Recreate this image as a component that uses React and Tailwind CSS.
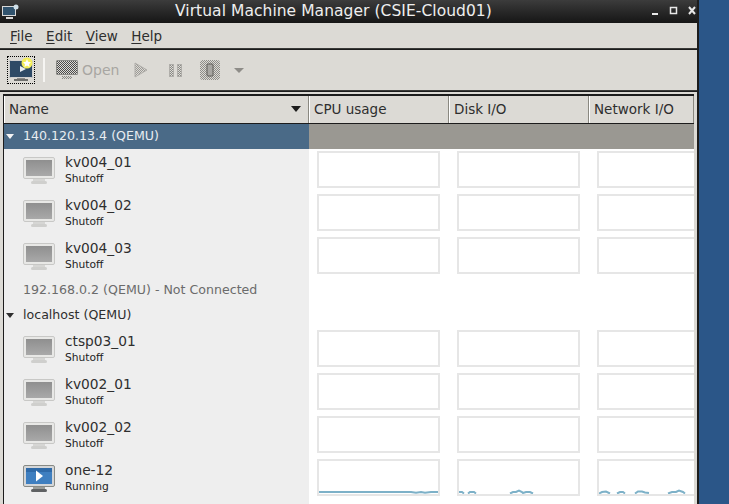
import React from 'react';

const font = { fontFamily: '"DejaVu Sans", sans-serif' };

const groups = [
  {
    name: '140.120.13.4 (QEMU)',
    selected: true,
    vms: ['kv004_01', 'kv004_02', 'kv004_03'],
  },
  { name: '192.168.0.2 (QEMU) - Not Connected', disconnected: true, vms: [] },
  {
    name: 'localhost (QEMU)',
    vms: ['ctsp03_01', 'kv002_01', 'kv002_02'],
  },
];

const MonitorIcon = ({ running = false }) => (
  <svg width="32" height="28" viewBox="0 0 32 28" className="shrink-0">
    <defs>
      <linearGradient id="offScreen" x1="0" y1="0" x2="0" y2="1">
        <stop offset="0" stopColor="#8f8f8f" />
        <stop offset="1" stopColor="#a9a9a9" />
      </linearGradient>
    </defs>
    <rect x="0.5" y="0.5" width="31" height="21" rx="1.5" fill={running ? '#d4d6d8' : '#e8e8e6'} stroke={running ? '#888a85' : '#c8c8c6'} />
    <rect x="3" y="3" width="26" height="16" fill={running ? '#3f7fc0' : 'url(#offScreen)'} />
    {running && <rect x="3" y="3" width="26" height="4" fill="#2f6aa8" />}
    {running && <path d="M13 5.5 L20 11 L13 16.5 Z" fill="#ffffff" />}
    <rect x="10" y="22" width="12" height="2" fill={running ? '#9a9c98' : '#d6d6d4'} />
    <rect x="8" y="24" width="16" height="3" rx="1.5" fill={running ? '#5f6163' : '#cfcfcd'} />
  </svg>
);

const Chart = ({ points, width = 'w-[123px]', clipped = false }) => (
  <div className={`h-[37px] bg-white border-2 border-[#e6e6e6] ${width} ${clipped ? 'border-r-0' : ''} shrink-0 overflow-hidden`}>
    {points && (
      <svg width="120" height="33" viewBox="0 0 120 33">
        <path d={points} fill="none" stroke="#7db1c8" strokeWidth="2" />
      </svg>
    )}
  </div>
);

const VmRow = ({ name, status = 'Shutoff', running, cpu, disk, net }) => (
  <div className="flex h-[43px]">
    <div className="w-[305px] shrink-0 bg-[#eeeeee] flex items-center pl-[19px] pt-[1px]">
      <MonitorIcon running={running} />
      <div className="ml-[10px] mb-[2px] flex flex-col">
        <span className="text-[13.75px] leading-[17px] text-[#2e2e2e]">{name}</span>
        <span className="mt-[1px] text-[10.7px] leading-[14px] text-[#222222]">{status}</span>
      </div>
    </div>
    <div className="flex-1 min-w-0 bg-white flex gap-[17px] pl-[8px] pt-[2px] overflow-hidden">
      <Chart points={cpu} />
      <Chart points={disk} />
      <Chart points={net} width="w-[98px]" clipped />
    </div>
  </div>
);

const GroupRow = ({ name, selected, disconnected }) => {
  if (selected) {
    return (
      <div className="flex h-[25px]">
        <div className="w-[305px] shrink-0 bg-[#4a6a87] text-[#e8edf1] flex items-center text-[12.6px] pl-[2px]">
          <span className="w-0 h-0 border-x-[4.5px] border-x-transparent border-t-[5px] border-t-[#f4f4f4] mr-[9px]" />
          {name}
        </div>
        <div className="flex-1 bg-[#9a9892]" />
      </div>
    );
  }
  return (
    <div className="flex h-[25px]">
      <div className={`w-[305px] shrink-0 bg-[#eeeeee] flex items-center text-[12.6px] ${disconnected ? 'pl-[19px] text-[#6b6b6b]' : 'pl-[2px] text-[#2e2e2e]'}`}>
        {!disconnected && <span className="w-0 h-0 border-x-[4.5px] border-x-transparent border-t-[5px] border-t-[#2e2e2e] mr-[9px]" />}
        {name}
      </div>
      <div className="flex-1 bg-white" />
    </div>
  );
};

const ColumnHead = ({ label, className = '', children }) => (
  <div className={`h-[27px] pb-[1px] bg-[#dcdad5] border-r border-[#8a8880] border-l border-l-white flex items-center pl-[4px] text-[13.5px] text-[#2e2e2e] ${className}`}>
    {label}
    {children}
  </div>
);

const Menu = ({ first, rest }) => (
  <span>
    <span className="underline underline-offset-2">{first}</span>
    {rest}
  </span>
);

// the disabled toolbar icons are stippled in the screenshot
const Dither = ({ id, color }) => (
  <pattern id={id} width="2" height="2" patternUnits="userSpaceOnUse">
    <rect width="2" height="2" fill="#dcdad5" />
    <rect width="1" height="1" fill={color} />
    <rect x="1" y="1" width="1" height="1" fill={color} />
  </pattern>
);

export default function App() {
  return (
    <div className="w-[729px] h-[504px] bg-[#2b5688] overflow-hidden" style={font}>
      <div className="w-[699px] h-[504px] bg-[#1c1c1c] flex flex-col pr-[2px]">
        {/* title bar */}
        <div className="h-[23px] shrink-0 bg-gradient-to-b from-[#3c3c3c] to-[#161616] flex items-center relative text-[#eeeeee]">
          <svg width="17" height="16" viewBox="0 0 17 16" className="ml-[2px]">
            <rect x="0.5" y="2.5" width="13" height="9" fill="#30536e" stroke="#d8d8d8" />
            <rect x="4" y="13" width="7" height="2" fill="#d8d8d8" />
            <circle cx="14" cy="3" r="2.5" fill="#cfe0ea" />
          </svg>
          <span className="ml-[156px] text-[15.5px] font-medium tracking-[0.05px]">Virtual Machine Manager (CSIE-Cloud01)</span>
          <svg width="50" height="12" viewBox="0 0 50 12" className="absolute left-[651px] top-[5px]">
            <rect x="1" y="8" width="6" height="2" fill="#e8e8e8" />
            <rect x="19.5" y="2.5" width="6" height="6" fill="none" stroke="#e8e8e8" strokeWidth="1.5" />
            <path d="M38 2 L44 9 M44 2 L38 9" stroke="#e8e8e8" strokeWidth="2" />
          </svg>
        </div>

        {/* menu bar */}
        <div className="h-[26px] shrink-0 bg-[#dcdad5] border-b border-[#3a3a38] flex items-center gap-[13.5px] pl-[10px] pt-[1px] text-[13.5px] text-[#2e2e2e]">
          <Menu first="F" rest="ile" />
          <Menu first="E" rest="dit" />
          <Menu first="V" rest="iew" />
          <Menu first="H" rest="elp" />
        </div>

        {/* toolbar */}
        <div className="h-[41px] shrink-0 mt-[1px] bg-[#dcdad5] border-b border-[#3a3a38] flex items-center pl-[7px] text-[#a8a6a2] text-[14px]">
          <div className="w-[28px] h-[28px] border border-dotted border-black flex items-center justify-center relative">
            <svg width="26" height="26" viewBox="0 0 26 26">
              <rect x="1.5" y="3.5" width="23" height="17" rx="1" fill="#2e4a66" stroke="#d0d0d0" />
              <path d="M12 9 L18 12 L12 15 Z" fill="#e8edf2" />
              <rect x="9" y="21" width="8" height="1" fill="#8a8a88" />
              <rect x="6" y="22" width="14" height="2" fill="#6e6e6c" />
              <circle cx="19" cy="6" r="5.5" fill="#f4ee5a" />
              <path d="M19 2 L20.2 4.8 L23 5.2 L21 7.2 L21.6 10 L19 8.6 L16.4 10 L17 7.2 L15 5.2 L17.8 4.8 Z" fill="#ffffff" />
            </svg>
          </div>
          <div className="w-[2px] h-[24px] bg-[#f6f5f2] ml-[8px] mr-[11px]" />
          <svg width="22" height="20" viewBox="0 0 22 20">
            <defs>
              <Dither id="ditherDark" color="#4a4a4a" />
              <Dither id="ditherMid" color="#8a8a86" />
            </defs>
            <rect x="0" y="0" width="22" height="15" rx="1.5" fill="#8a8a86" />
            <rect x="1" y="1" width="20" height="13" fill="url(#ditherDark)" />
            <rect x="6" y="16" width="10" height="3" fill="url(#ditherMid)" />
          </svg>
          <span className="ml-[4px] w-[38px]">Open</span>
          <svg width="14" height="16" viewBox="0 0 14 16" className="ml-[14px]">
            <defs><Dither id="ditherPlay" color="#9a9894" /></defs>
            <path d="M1 1 L13 8 L1 15 Z" fill="url(#ditherPlay)" stroke="#b0aeaa" />
          </svg>
          <svg width="14" height="13" viewBox="0 0 14 13" className="ml-[21px]">
            <defs><Dither id="ditherPause" color="#8a8a86" /></defs>
            <rect x="0.5" y="0.5" width="4" height="12" fill="url(#ditherPause)" stroke="#b0aeaa" />
            <rect x="8.5" y="0.5" width="4" height="12" fill="url(#ditherPause)" stroke="#b0aeaa" />
          </svg>
          <svg width="20" height="20" viewBox="0 0 20 20" className="ml-[17px]">
            <defs><Dither id="ditherStop" color="#8e8c88" /></defs>
            <rect x="0" y="0" width="20" height="20" rx="3" fill="url(#ditherStop)" />
            <rect x="7" y="4" width="6" height="12" rx="1" fill="#a8a6a2" stroke="#5e5c58" />
          </svg>
          <span className="ml-[14px] w-0 h-0 border-x-[5px] border-x-transparent border-t-[5px] border-t-[#8e8c88]" />
        </div>

        {/* vm list */}
        <div className="flex-1 min-h-0 mt-[1px] pt-[2px] pl-[3px] pr-[3px] bg-[#dcdad5]">
          <div className="h-full border-t-2 border-l border-[#1c1c1c] overflow-hidden flex flex-col bg-white">
            <div className="flex shrink-0 border-b border-[#1c1c1c]">
              <ColumnHead label="Name" className="w-[305px] shrink-0 relative">
                <span className="absolute right-[7px] top-[10px] w-0 h-0 border-x-[5px] border-x-transparent border-t-[6px] border-t-[#1c1c1c]" />
              </ColumnHead>
              <ColumnHead label="CPU usage" className="w-[140px] shrink-0" />
              <ColumnHead label="Disk I/O" className="w-[140px] shrink-0" />
              <ColumnHead label="Network I/O" className="flex-1" />
            </div>
            <GroupRow {...groups[0]} />
            {groups[0].vms.map((vm) => <VmRow key={vm} name={vm} />)}
            <GroupRow {...groups[1]} />
            <GroupRow {...groups[2]} />
            {groups[2].vms.map((vm) => <VmRow key={vm} name={vm} />)}
            <VmRow
              name="one-12"
              status="Running"
              running
              cpu="M0 31 L92 31 L97 31.8 L102 31 L106 31.8 L112 31 L120 31"
              disk="M0 31 L3 31 L5 32.5 M9 32.5 L11 31 L15 31 L17 32.5 M51 32.5 L54 31 L57 31 L60 29.5 L63 31 L64 32 L67 31 L71 31 L74 32.5"
              net="M0 32.5 L3 31 L7 30.5 L11 32.5 M18 32.5 L21 31 L24 31 L26 32.5 M36 32.5 L39 30.5 L43 30.5 L46 31.5 L50 32 M69 32.5 L73 31 L77 31 L80 29.5 L84 31 L86 32.5"
            />
            <div className="flex flex-1">
              <div className="w-[305px] bg-[#eeeeee]" />
              <div className="flex-1 bg-white" />
            </div>
          </div>
        </div>
      </div>
    </div>
  );
}
